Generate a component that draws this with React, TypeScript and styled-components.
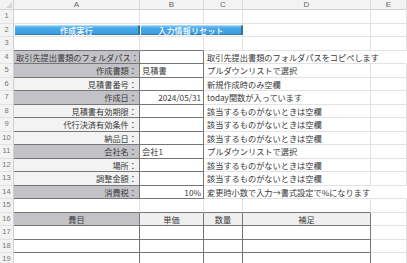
import styled, { createGlobalStyle } from 'styled-components';

const GRID = '#e2e2e2';
const DARK = '#767676';
const LABEL_DARK = '#c3c3c7';
const LABEL_LIGHT = '#f3f3f3';
const HEAD_LIGHT = '#efefef';

const GlobalStyle = createGlobalStyle`
  html, body { margin: 0; padding: 0; background: #fff; overflow: hidden; }
  * { box-sizing: border-box; }
`;

const Sheet = styled.div`
  display: grid;
  grid-template-columns: 14px 126px 64px 39px 128px 1fr;
  grid-template-rows: 10px repeat(19, 13.5px);
  width: 407px;
  height: 263px;
  overflow: hidden;
  font-family: "Noto Sans CJK JP", "Noto Sans", sans-serif;
  font-size: 8.2px;
  color: #3a3a3a;
`;

const Corner = styled.div`
  position: relative;
  background: #f3f3f3;
  border-right: 1px solid #d0d0d0;
  border-bottom: 1px solid #d0d0d0;
  &::after {
    content: '';
    position: absolute;
    right: 1px;
    bottom: 1px;
    border-left: 6px solid transparent;
    border-bottom: 6px solid #d6d6d6;
  }
`;

const ColHead = styled.div`
  background: #f3f3f3;
  border-right: 1px solid #dadada;
  border-bottom: 1px solid #d0d0d0;
  color: #666;
  font-family: "Liberation Sans", Arial, sans-serif;
  font-size: 8px;
  line-height: 9px;
  text-align: center;
`;

const RowHead = styled.div`
  background: #f3f3f3;
  border-right: 1px solid #d0d0d0;
  border-bottom: 1px solid ${GRID};
  color: #777;
  font-family: "Liberation Sans", Arial, sans-serif;
  font-size: 7.5px;
  line-height: 12.5px;
  text-align: center;
`;

const Cell = styled.div<{ $bg?: string; $align?: string; $bottom?: string; $right?: string; $span?: number; $pad?: number }>`
  grid-column: span ${p => p.$span ?? 1};
  background: ${p => p.$bg ?? 'transparent'};
  border-right: 1px solid ${p => p.$right ?? GRID};
  border-bottom: 1px solid ${p => p.$bottom ?? GRID};
  text-align: ${p => p.$align ?? 'left'};
  padding: 0 ${p => p.$pad ?? 3}px;
  line-height: 12.5px;
  white-space: nowrap;
  overflow: visible;
`;

const ButtonCell = styled.div<{ $span?: number }>`
  grid-column: span ${p => p.$span ?? 1};
  padding: 1px 0 1px 1px;
  border-bottom: 1px solid ${GRID};
`;

const Btn = styled.div`
  height: 100%;
  background: linear-gradient(180deg, #7cc4f2 0%, #4aa8e8 25%, #3b9de2 100%);
  border-top: 1px solid #a9daf8;
  border-right: 2px solid #3c6f96;
  border-bottom: 1px solid #2f79b3;
  color: #fff;
  font-weight: 500;
  font-size: 8px;
  line-height: 10px;
  text-align: center;
  letter-spacing: 0.2px;
`;

type Def = {
  text?: string;
  bg?: string;
  align?: string;
  bottom?: string;
  right?: string;
  span?: number;
  pad?: number;
  button?: boolean;
};

const plain = (n: number): Def[] => Array.from({ length: n }, () => ({}));

const info: [string, boolean, string, string, string, number][] = [
  ['取引先提出書類のフォルダパス：', true, '', 'left', '取引先提出書類のフォルダパスをコピペします', 3],
  ['作成書類：', true, '見積書', 'left', 'プルダウンリストで選択', 2],
  ['見積書番号：', false, '', 'left', '新規作成時のみ空欄', 2],
  ['作成日：', true, '2024/05/31', 'right', 'today関数が入っています', 2],
  ['見積書有効期限：', false, '', 'left', '該当するものがないときは空欄', 2],
  ['代行決済有効条件：', false, '', 'left', '該当するものがないときは空欄', 2],
  ['納品日：', false, '', 'left', '該当するものがないときは空欄', 2],
  ['会社名：', true, '会社1', 'left', 'プルダウンリストで選択', 2],
  ['場所：', false, '', 'left', '該当するものがないときは空欄', 2],
  ['調整金額：', false, '', 'left', '該当するものがないときは空欄', 2],
  ['消費税：', true, '10%', 'right', '変更時小数で入力→書式設定で%になります', 3],
];

const tableRow = (): Def[] => [
  { bottom: DARK, right: DARK },
  { bottom: DARK, right: DARK },
  { bottom: DARK, right: DARK },
  { bottom: DARK, right: DARK },
  {},
];

const rows: Def[][] = [
  plain(5),
  [{ button: true, text: '作成実行' }, { button: true, text: '入力情報リセット', span: 2 }, {}, {}],
  [{ bottom: DARK }, { bottom: DARK }, {}, {}, {}],
  ...info.map(([label, dark, value, align, note, span]): Def[] => {
    const r: Def[] = [
      { text: label, bg: dark ? LABEL_DARK : LABEL_LIGHT, align: 'right', bottom: DARK, right: DARK, pad: 2 },
      { text: value, align, bottom: DARK, right: DARK, pad: 2 },
      { text: note, span, right: span === 3 ? 'transparent' : GRID },
    ];
    if (span === 2) r.push({});
    return r;
  }),
  [{ bottom: DARK }, { bottom: DARK }, { bottom: DARK }, { bottom: DARK }, {}],
  [
    { text: '費目', bg: LABEL_DARK, align: 'center', bottom: DARK, right: DARK },
    { text: '単価', bg: HEAD_LIGHT, align: 'center', bottom: DARK, right: DARK },
    { text: '数量', bg: HEAD_LIGHT, align: 'center', bottom: DARK, right: DARK },
    { text: '補足', bg: HEAD_LIGHT, align: 'center', bottom: DARK, right: DARK },
    {},
  ],
  tableRow(),
  tableRow(),
  tableRow(),
];

export default function App() {
  return (
    <>
      <GlobalStyle />
      <Sheet>
        <Corner />
        {['A', 'B', 'C', 'D', 'E'].map(c => (
          <ColHead key={c}>{c}</ColHead>
        ))}
        {rows.map((row, i) => [
          <RowHead key={`h${i}`}>{i + 1}</RowHead>,
          ...row.map((c, j) =>
            c.button ? (
              <ButtonCell key={`${i}-${j}`} $span={c.span}>
                <Btn>{c.text}</Btn>
              </ButtonCell>
            ) : (
              <Cell
                key={`${i}-${j}`}
                $bg={c.bg}
                $align={c.align}
                $bottom={c.bottom}
                $right={c.right}
                $span={c.span}
                $pad={c.pad}
              >
                {c.text}
              </Cell>
            )
          ),
        ])}
      </Sheet>
    </>
  );
}
